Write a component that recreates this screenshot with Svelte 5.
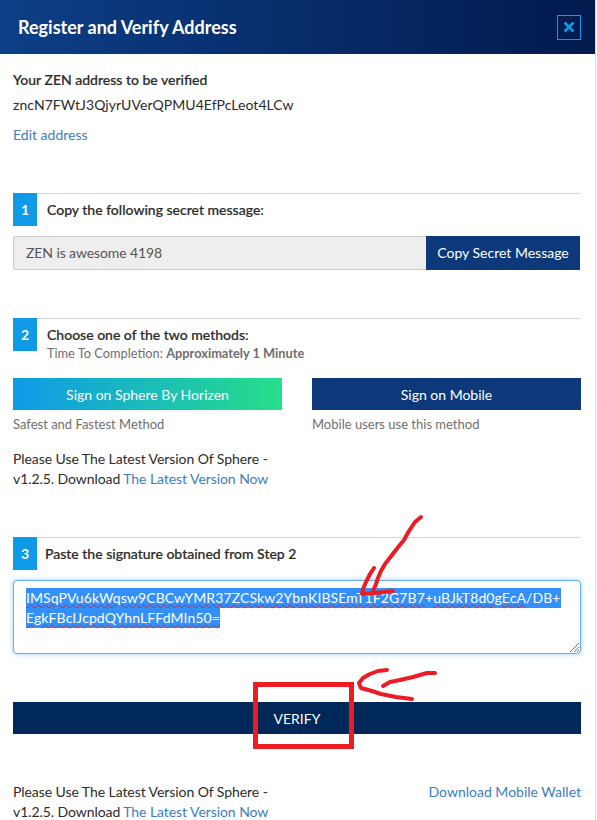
<script>
  // strokes of the red marker drawn over the screenshot
  const marks = [
    'M421 517 L415 522 L409 531 L404 540 L399 546 L392 555 L385 564 L381 571 L378 578 L376 584 L373 591',
    'M374 568 L370 574 L366 582 L363 589 L362 594 L375 593 L384 592 L393 591',
    'M387 670 L378 671 L370 674 L363 678 L359 683 L361 688 L372 691 L381 694 L396 697 L412 699',
    'M435 673 L427 673 L413 677 L400 680 L390 682 L383 686'
  ];
</script>

<div class="modal">
  <header class="head">
    <h1>Register and Verify Address</h1>
    <button class="close" aria-label="Close">
      <svg width="12" height="12" viewBox="0 0 12 12"><path d="M1.5 1.5 L10.5 10.5 M10.5 1.5 L1.5 10.5" stroke="#0f9ae8" stroke-width="2.6" fill="none"/></svg>
    </button>
  </header>

  <div class="body">
    <section class="address">
      <div class="addr-label">Your ZEN address to be verified</div>
      <div class="addr-value">zncN7FWtJ3QjyrUVerQPMU4EfPcLeot4LCw</div>
      <a class="link edit" href="#edit">Edit address</a>
    </section>

    <section class="step one">
      <div class="step-head">
        <span class="badge">1</span>
        <div class="step-title">Copy the following secret message:</div>
      </div>
      <div class="copy-row">
        <div class="secret">ZEN is awesome 4198</div>
        <button class="btn navy copy">Copy Secret Message</button>
      </div>
    </section>

    <section class="step two">
      <div class="step-head">
        <span class="badge">2</span>
        <div class="step-title">
          Choose one of the two methods:
          <div class="time">Time To Completion: <b>Approximately 1 Minute</b></div>
        </div>
      </div>
      <div class="methods">
        <div class="method">
          <button class="btn sphere">Sign on Sphere By Horizen</button>
          <div class="hint">Safest and Fastest Method</div>
          <p class="note">Please Use The Latest Version Of Sphere - v1.2.5. Download <a class="link" href="#sphere">The Latest Version Now</a></p>
        </div>
        <div class="method">
          <button class="btn navy">Sign on Mobile</button>
          <div class="hint">Mobile users use this method</div>
        </div>
      </div>
    </section>

    <section class="step three">
      <div class="step-head">
        <span class="badge">3</span>
        <div class="step-title paste">Paste the signature obtained from Step 2</div>
      </div>
      <div class="signature">
        <div class="sig-line"><span class="sel"><span class="wavy">IMSqPVu6kWqsw9CBCwYMR37ZCSkw2YbnKIBSEmT1F2G7B7</span>+<span class="wavy">uBJkT8d0gEcA</span>/DB+</span></div>
        <div class="sig-line"><span class="sel"><span class="wavy">EgkFBcIJcpdQYhnLFFdMIn50=</span></span></div>
        <svg class="grip" width="9" height="9" viewBox="0 0 9 9"><path d="M0 9 L9 0 M4 9 L9 4 M7 9 L9 7" stroke="#777" fill="none"/></svg>
      </div>
      <button class="btn verify">VERIFY</button>
    </section>

    <footer class="foot">
      <p class="note">Please Use The Latest Version Of Sphere - v1.2.5. Download <a class="link" href="#sphere">The Latest Version Now</a></p>
      <a class="link wallet" href="#wallet">Download Mobile Wallet</a>
    </footer>
  </div>

  <svg class="marker" width="597" height="820" viewBox="0 0 597 820">
    {#each marks as d}
      <path {d} fill="none" stroke="#ed1c24" stroke-width="4" stroke-linecap="round" stroke-linejoin="round" />
    {/each}
    <rect x="255.500" y="684.500" width="96" height="62" fill="none" stroke="#ed1c24" stroke-width="5" />
  </svg>
</div>

<style>
  :global(body) {
    margin: 0;
    background: #fff;
  }

  .modal {
    position: relative;
    width: 595px;
    height: 820px;
    overflow: hidden;
    border-right: 1px solid #d8d8d8;
    font-family: Lato, "Liberation Sans", sans-serif;
    font-size: 14px;
    color: #2b2b2b;
    background: #fff;
  }

  .head {
    height: 54px;
    display: flex;
    align-items: center;
    justify-content: space-between;
    padding: 0 14px 0 18px;
    background: linear-gradient(90deg, #0c3f86, #021a4e);
  }

  h1 {
    margin: 0;
    font-size: 18px;
    font-weight: 700;
    color: #fff;
  }

  .close {
    width: 24px;
    height: 25px;
    padding: 0;
    display: flex;
    align-items: center;
    justify-content: center;
    background: transparent;
    border: 1px solid #0f9ae8;
  }

  .body {
    padding: 0 14px 0 13px;
  }

  .address {
    height: 139px;
    padding-top: 16px;
    box-sizing: border-box;
  }

  .addr-label {
    font-weight: 500;
    line-height: 20px;
    -webkit-text-stroke: 0.2px #2b2b2b;
  }

  .addr-value {
    margin-top: 5px;
    line-height: 20px;
    letter-spacing: 0.05px;
  }

  .link {
    color: #3d7cc0;
    text-decoration: none;
  }

  .edit {
    display: block;
    margin-top: 10px;
    line-height: 20px;
  }

  .step {
    border-top: 1px solid #d4d4d4;
  }

  .one {
    height: 124px;
  }

  .two {
    height: 218px;
  }

  .three {
    height: 225px;
  }

  .step-head {
    display: flex;
    gap: 10px;
    min-height: 33px;
    margin-top: -1px;
  }

  .badge {
    flex: none;
    width: 24px;
    height: 33px;
    display: flex;
    align-items: center;
    justify-content: center;
    background: #0f9ae8;
    color: #fff;
    font-weight: 700;
    font-size: 14px;
  }

  .step-title {
    padding-top: 8px;
    line-height: 17px;
    font-weight: 500;
    -webkit-text-stroke: 0.2px #2b2b2b;
  }

  .paste {
    margin-left: -2px;
  }

  .time {
    margin-top: 2px;
    font-size: 12.800px;
    line-height: 16px;
    font-weight: 400;
    color: #6f6f6f;
    -webkit-text-stroke: 0;
  }

  .time b {
    font-weight: 700;
  }

  .copy-row {
    display: flex;
    margin: 10px 1px 0 0;
    height: 34px;
  }

  .secret {
    flex: 1;
    display: flex;
    align-items: center;
    padding: 0 0 1px 12px;
    background: #eee;
    border: 1px solid #ccc;
    border-right: 0;
    border-radius: 3px 0 0 3px;
    color: #555;
    letter-spacing: -0.1px;
  }

  .btn {
    border: 0;
    padding: 0;
    font-family: inherit;
    font-size: 14px;
    color: #fff;
  }

  .navy {
    background: #0d397b;
  }

  .copy {
    width: 154px;
    padding-bottom: 1px;
  }

  .methods {
    display: grid;
    grid-template-columns: 269px 269px;
    gap: 30px;
    margin-top: 17px;
  }

  .method .btn {
    width: 100%;
    height: 32px;
  }

  .sphere {
    background: linear-gradient(90deg, #0f9ae8, #26de8a);
  }

  .hint {
    margin-top: 6px;
    font-size: 13px;
    line-height: 17px;
    color: #6f6f6f;
  }

  .note {
    margin: 0;
    line-height: 20px;
    color: #2b2b2b;
    letter-spacing: -0.07px;
  }

  .method .note {
    margin-top: 16px;
  }

  .signature {
    position: relative;
    height: 74px;
    box-sizing: border-box;
    margin-top: 10px;
    padding: 7px 12px;
    border: 1px solid #66afe9;
    border-radius: 4px;
    box-shadow: 0 0 5px rgba(102, 175, 233, 0.6);
    background: #fff;
  }

  .sig-line {
    line-height: 20px;
    white-space: nowrap;
    letter-spacing: 0.1px;
  }

  .sel {
    display: inline-block;
    background: #3390fb;
    color: #fff;
  }

  .wavy {
    text-decoration: underline wavy #e0202c 1px;
    text-underline-offset: 1px;
  }

  .grip {
    position: absolute;
    right: 1px;
    bottom: 1px;
  }

  .verify {
    display: block;
    width: 100%;
    height: 32px;
    margin-top: 48px;
    background: #002858;
  }

  .foot {
    display: flex;
    justify-content: space-between;
    margin-top: 19px;
  }

  .foot .note {
    width: 269px;
  }

  .wallet {
    line-height: 20px;
  }

  .marker {
    position: absolute;
    top: 0;
    left: 0;
    pointer-events: none;
  }
</style>
